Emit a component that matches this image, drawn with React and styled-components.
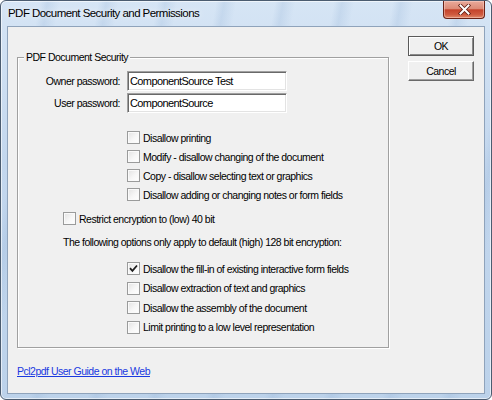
import React from 'react';
import styled, { createGlobalStyle } from 'styled-components';

const texts = {
    title: 'PDF Document Security and Permissions',
    legend: 'PDF Document Security',
    owner: 'Owner password:',
    user: 'User password:',
    ok: 'OK',
    cancel: 'Cancel',
    restrict: 'Restrict encryption to (low) 40 bit',
    following: 'The following options only apply to default (high) 128 bit encryption:',
    link: 'Pcl2pdf User Guide on the Web',
};

const basicOptions = [
    { label: 'Disallow printing', checked: false },
    { label: 'Modify - disallow changing of the document', checked: false },
    { label: 'Copy - disallow selecting text or graphics', checked: false },
    { label: 'Disallow adding or changing notes or form fields', checked: false },
];

const highOptions = [
    { label: 'Disallow the fill-in of existing interactive form fields', checked: true },
    { label: 'Disallow extraction of text and graphics', checked: false },
    { label: 'Disallow the assembly of the document', checked: false },
    { label: 'Limit printing to a low level representation', checked: false },
];

const uiFont = '"Liberation Sans", Arial, sans-serif';

const GlobalStyle = createGlobalStyle`
    html, body {
        margin: 0;
        padding: 0;
        background: #ffffff;
    }
    * {
        box-sizing: border-box;
    }
`;

const Window = styled.div`
    width: 492px;
    height: 400px;
    display: flex;
    flex-direction: column;
    padding: 0 6px 5px 6px;
    border: 1px solid #4b5c70;
    border-radius: 6px;
    overflow: hidden;
    background:
        repeating-linear-gradient(100deg, rgba(255, 255, 255, 0) 0px, rgba(255, 255, 255, 0) 38px, rgba(150, 180, 215, 0.25) 46px, rgba(255, 255, 255, 0) 58px),
        linear-gradient(to bottom, #d6e5f5 0%, #c3d7ee 40%, #bcd2ea 100%);
    box-shadow: inset 0 0 0 1px rgba(255, 255, 255, 0.6);
`;

const TitleBar = styled.div`
    height: 25px;
    display: flex;
    align-items: flex-start;
    justify-content: space-between;
    padding-left: 1px;
`;

const Title = styled.div`
    margin-top: 6px;
    font-family: "Liberation Sans", Arial, sans-serif;
    font-size: 11.5px;
    letter-spacing: -0.55px;
    color: #000;
    text-shadow: 0 0 6px rgba(255, 255, 255, 0.9);
`;

const CloseButton = styled.div`
    width: 42px;
    height: 18px;
    display: flex;
    align-items: center;
    justify-content: center;
    border: 1px solid #6a2317;
    border-top: none;
    border-radius: 0 0 4px 4px;
    background: linear-gradient(to bottom, #e9aa9b 0%, #dc8b77 45%, #c4432b 52%, #cf5b40 80%, #e08a6a 100%);
    box-shadow: inset 0 0 0 1px rgba(255, 220, 210, 0.45);
`;

const Client = styled.div`
    flex: 1;
    display: flex;
    padding: 0 10px 0 9px;
    border: 1px solid #8fa3bb;
    background: #f0f0f0;
    font-family: ${uiFont};
    font-size: 10.5px;
    letter-spacing: -0.5px;
    white-space: nowrap;
    color: #000;
`;

const MainColumn = styled.div`
    width: 372px;
    display: flex;
    flex-direction: column;
`;

const SideColumn = styled.div`
    margin-left: auto;
    padding-top: 9px;
    display: flex;
    flex-direction: column;
    gap: 5px;
`;

const Button = styled.div`
    width: 66px;
    height: 20px;
    display: flex;
    align-items: center;
    justify-content: center;
    background: #f0f0f0;
    border: 1px solid ${(p) => (p.$default ? '#5a5a5a' : '#fff')};
    border-right-color: ${(p) => (p.$default ? '#5a5a5a' : '#696969')};
    border-bottom-color: ${(p) => (p.$default ? '#5a5a5a' : '#696969')};
    box-shadow: ${(p) => (p.$default
        ? 'inset 1px 1px 0 #fff, inset -1px -1px 0 #8a8a8a'
        : 'inset -1px -1px 0 #a0a0a0')};
`;

const Group = styled.div`
    position: relative;
    margin-top: 30px;
    padding: 13px 0 10px 0;
    border: 1px solid #a0a0a0;
    box-shadow: 1px 1px 0 #fff, inset 1px 1px 0 #fff;
`;

const Legend = styled.span`
    position: absolute;
    top: -7px;
    left: 6px;
    padding: 0 2px;
    background: #f0f0f0;
    line-height: 13px;
`;

const PasswordGrid = styled.div`
    display: grid;
    grid-template-columns: 102px 160px;
    column-gap: 7px;
    row-gap: 2px;
    align-items: center;
`;

const Label = styled.label`
    text-align: right;
`;

const TextInput = styled.div`
    height: 20px;
    display: flex;
    align-items: center;
    padding-left: 2px;
    background: #fff;
    border: 1px solid #a0a0a0;
    border-right-color: #fff;
    border-bottom-color: #fff;
    box-shadow: inset 1px 1px 0 #696969, inset -1px -1px 0 #e3e3e3;
    font-size: 11px;
    letter-spacing: -0.6px;
`;

const OptionList = styled.div`
    display: flex;
    flex-direction: column;
    margin-top: ${(p) => p.$top}px;
    margin-left: ${(p) => p.$indent}px;
`;

const OptionRow = styled.div`
    height: ${(p) => p.$height}px;
    display: flex;
    align-items: center;
    gap: 3px;
`;

const Box = styled.span`
    width: 13px;
    height: 13px;
    flex: none;
    display: flex;
    align-items: center;
    justify-content: center;
    border: 1px solid #9a9b9b;
    background: linear-gradient(135deg, #e2e2e2 0%, #f7f7f7 55%, #ffffff 100%);
    box-shadow: inset 0 0 0 1px #fafafa;
`;

const Note = styled.div`
    height: 19px;
    display: flex;
    align-items: center;
    margin-top: 4px;
    margin-left: 45px;
`;

const Link = styled.a`
    margin-top: 17px;
    line-height: 13px;
    color: #1a3ae0;
    text-decoration: underline;
    cursor: pointer;
`;

const CloseGlyph = () => (
    <svg width="13" height="11" viewBox="0 0 13 11">
        <path d="M2.5 1.5 L10.5 9.5 M10.5 1.5 L2.5 9.5" stroke="#5b1a10" strokeWidth="3.6" strokeLinecap="square" />
        <path d="M2.5 1.5 L10.5 9.5 M10.5 1.5 L2.5 9.5" stroke="#fff" strokeWidth="2" strokeLinecap="square" />
    </svg>
);

const CheckMark = () => (
    <svg width="9" height="9" viewBox="0 0 9 9">
        <path d="M1 4.2 L3.4 6.8 L8 1.5" fill="none" stroke="#1e1e1e" strokeWidth="1.8" />
    </svg>
);

const Option = ({ label, checked, height }) => (
    <OptionRow $height={height}>
        <Box>{checked && <CheckMark />}</Box>
        <span>{label}</span>
    </OptionRow>
);

const App = () => {
    return (
        <>
            <GlobalStyle />
            <Window>
                <TitleBar>
                    <Title>{texts.title}</Title>
                    <CloseButton>
                        <CloseGlyph />
                    </CloseButton>
                </TitleBar>
                <Client>
                    <MainColumn>
                        <Group>
                            <Legend>{texts.legend}</Legend>
                            <PasswordGrid>
                                <Label>{texts.owner}</Label>
                                <TextInput>ComponentSource Test</TextInput>
                                <Label>{texts.user}</Label>
                                <TextInput>ComponentSource</TextInput>
                            </PasswordGrid>
                            <OptionList $top={15} $indent={109}>
                                {basicOptions.map((o) => (
                                    <Option key={o.label} label={o.label} checked={o.checked} height={19} />
                                ))}
                            </OptionList>
                            <OptionList $top={5} $indent={45}>
                                <Option label={texts.restrict} checked={false} height={19} />
                            </OptionList>
                            <Note>{texts.following}</Note>
                            <OptionList $top={8} $indent={109}>
                                {highOptions.map((o) => (
                                    <Option key={o.label} label={o.label} checked={o.checked} height={19.5} />
                                ))}
                            </OptionList>
                        </Group>
                        <Link>{texts.link}</Link>
                    </MainColumn>
                    <SideColumn>
                        <Button $default>{texts.ok}</Button>
                        <Button>{texts.cancel}</Button>
                    </SideColumn>
                </Client>
            </Window>
        </>
    );
};

export default App;
